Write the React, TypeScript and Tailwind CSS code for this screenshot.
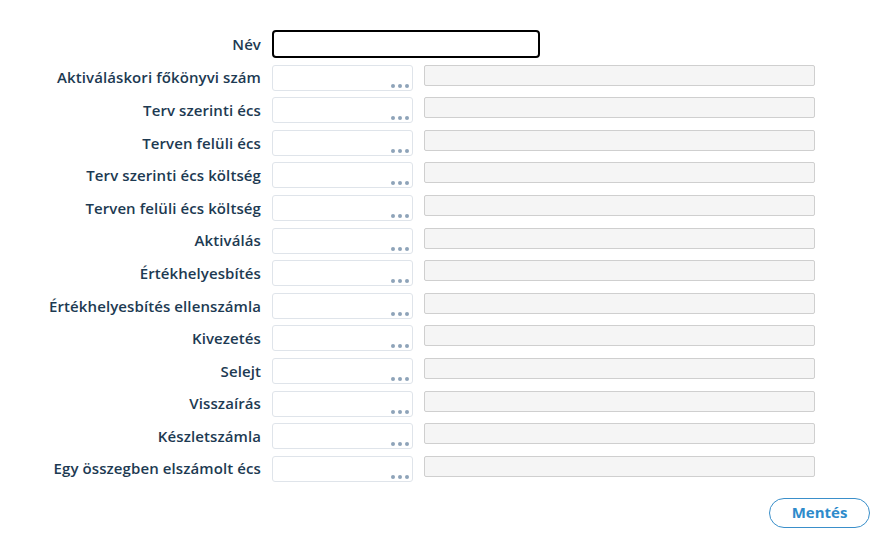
const rows = [
  "Aktiváláskori főkönyvi szám",
  "Terv szerinti écs",
  "Terven felüli écs",
  "Terv szerinti écs költség",
  "Terven felüli écs költség",
  "Aktiválás",
  "Értékhelyesbítés",
  "Értékhelyesbítés ellenszámla",
  "Kivezetés",
  "Selejt",
  "Visszaírás",
  "Készletszámla",
  "Egy összegben elszámolt écs",
];

const Dots = () => (
  <div className="absolute right-[3px] bottom-[2px] flex gap-[3px]">
    <span className="w-[4px] h-[4px] rounded-full bg-[#8ea3b9]" />
    <span className="w-[4px] h-[4px] rounded-full bg-[#8ea3b9]" />
    <span className="w-[4px] h-[4px] rounded-full bg-[#8ea3b9]" />
  </div>
);

export default function App() {
  return (
    <div
      className="w-[874px] h-[537px] bg-white text-[#1d3a52]"
      style={{ fontFamily: '"Open Sans", "Liberation Sans", sans-serif' }}
    >
      <div className="pt-[30px] flex flex-col gap-[6.6px]">
        <div className="flex items-center">
          <label className="w-[261px] text-right text-[15px] font-semibold tracking-[0.1px]">Név</label>
          <input
            type="text"
            className="ml-[11px] w-[268px] h-[28px] border-2 border-black rounded-[4px] outline-none px-2"
          />
        </div>
        {rows.map((r) => (
          <div key={r} className="flex items-start">
            <label className="w-[261px] h-[26px] flex items-center justify-end text-[15px] font-semibold whitespace-nowrap tracking-[0.1px]">
              {r}
            </label>
            <div className="ml-[11px] relative w-[141px] h-[26px] border border-[#dfe4ea] rounded-[3px] bg-white">
              <Dots />
            </div>
            <div className="ml-[11px] w-[391px] h-[21px] border border-[#cfcfcf] rounded-[2px] bg-[#f5f5f5]" />
          </div>
        ))}
      </div>
      <div className="flex justify-end pr-[4px] pt-[16px]">
        <button className="w-[101px] h-[30px] rounded-full border border-[#3a8fca] text-[#2e8bcb] text-[15px] font-bold bg-white">
          Mentés
        </button>
      </div>
    </div>
  );
}
